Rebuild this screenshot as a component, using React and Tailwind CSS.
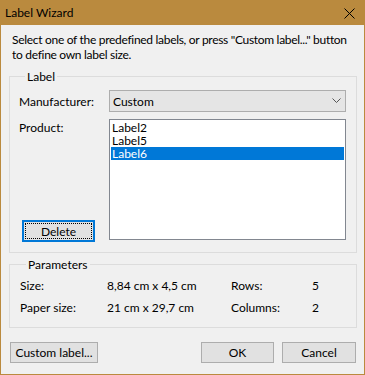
import React from "react";

const font = { fontFamily: 'Lato, "Noto Sans", sans-serif' };

function Btn({ children, className = "" }) {
  return (
    <div
      className={
        "flex h-[21px] items-center justify-center border border-[#adadad] bg-[#e1e1e1] text-[12px] leading-[15px] text-black " +
        className
      }
    >
      {children}
    </div>
  );
}

export default function App() {
  return (
    <div
      className="flex h-[375px] w-[365px] flex-col overflow-hidden border-x border-b border-[#ba8a3e] bg-[#f0f0f0] text-[12px] leading-[15px] text-black"
      style={font}
    >
      {/* title bar */}
      <div className="-mx-px flex h-[25px] shrink-0 items-center justify-between bg-[#ba8a3e] pl-[5px] pr-[10px]">
        <span className="text-[12px] leading-[15px]">Label Wizard</span>
        <svg width="11" height="11" viewBox="0 0 11 11" className="mt-px">
          <path d="M0.5 0.5 L10.5 10.5 M10.5 0.5 L0.5 10.5" stroke="#000" strokeWidth="1" />
        </svg>
      </div>

      {/* intro */}
      <div className="mt-[7px] whitespace-nowrap pl-[11px] pr-[8px] tracking-[-0.3px]">
        <div>Select one of the predefined labels, or press "Custom label..." button</div>
        <div>to define own label size.</div>
      </div>

      {/* Label group */}
      <fieldset className="ml-[8px] mr-[7px] mt-[7px] border border-[#dcdcdc] pb-[12px] pl-[9px] pr-[10px]">
        <legend className="ml-[6px] px-[2px] leading-[15px]">Label</legend>
        <div className="mt-[6px] flex items-center">
          <div className="w-[90px]">Manufacturer:</div>
          <div className="flex h-[22px] flex-1 items-center justify-between border border-[#adadad] bg-[#e5e5e5] pl-[3px] pr-[4px]">
            <span>Custom</span>
            <svg width="9" height="6" viewBox="0 0 9 6">
              <path d="M0.5 0.5 L4.5 4.5 L8.5 0.5" stroke="#555" strokeWidth="1" fill="none" />
            </svg>
          </div>
        </div>
        <div className="mt-[7px] flex">
          <div className="flex w-[90px] flex-col">
            <div className="pt-[1px]">Product:</div>
            <div className="mb-[-2px] ml-[3px] mt-auto w-[73px]">
              <div className="flex h-[22px] items-center justify-center border-2 border-[#0078d7] bg-[#e1e1e1] outline outline-1 outline-dotted outline-black outline-offset-[-4px]">
                Delete
              </div>
            </div>
          </div>
          <div className="flex h-[121px] flex-1 flex-col border border-[#828790] bg-white p-px">
            <div className="h-[13px] pl-[1px] leading-[13px]">Label2</div>
            <div className="h-[13px] pl-[1px] leading-[13px]">Label5</div>
            <div className="h-[13px] bg-[#0078d7] pl-[1px] leading-[13px] text-white">Label6</div>
          </div>
        </div>
      </fieldset>

      {/* Parameters group */}
      <fieldset className="ml-[8px] mr-[7px] mt-[4px] border border-[#dcdcdc] pb-[12px] pl-[10px]">
        <legend className="ml-[6px] px-[2px] leading-[15px]">Parameters</legend>
        <div className="mt-[6px] grid grid-cols-[87px_124px_81px_1fr] gap-y-[7px]">
          <div>Size:</div>
          <div>8,84 cm x 4,5 cm</div>
          <div>Rows:</div>
          <div>5</div>
          <div>Paper size:</div>
          <div>21 cm x 29,7 cm</div>
          <div>Columns:</div>
          <div>2</div>
        </div>
      </fieldset>

      {/* buttons */}
      <div className="mt-[14px] flex pl-[9px] pr-[8px]">
        <Btn className="w-[88px]">Custom label...</Btn>
        <div className="flex-1" />
        <Btn className="w-[73px]">OK</Btn>
        <Btn className="ml-[8px] w-[74px]">Cancel</Btn>
      </div>
    </div>
  );
}
